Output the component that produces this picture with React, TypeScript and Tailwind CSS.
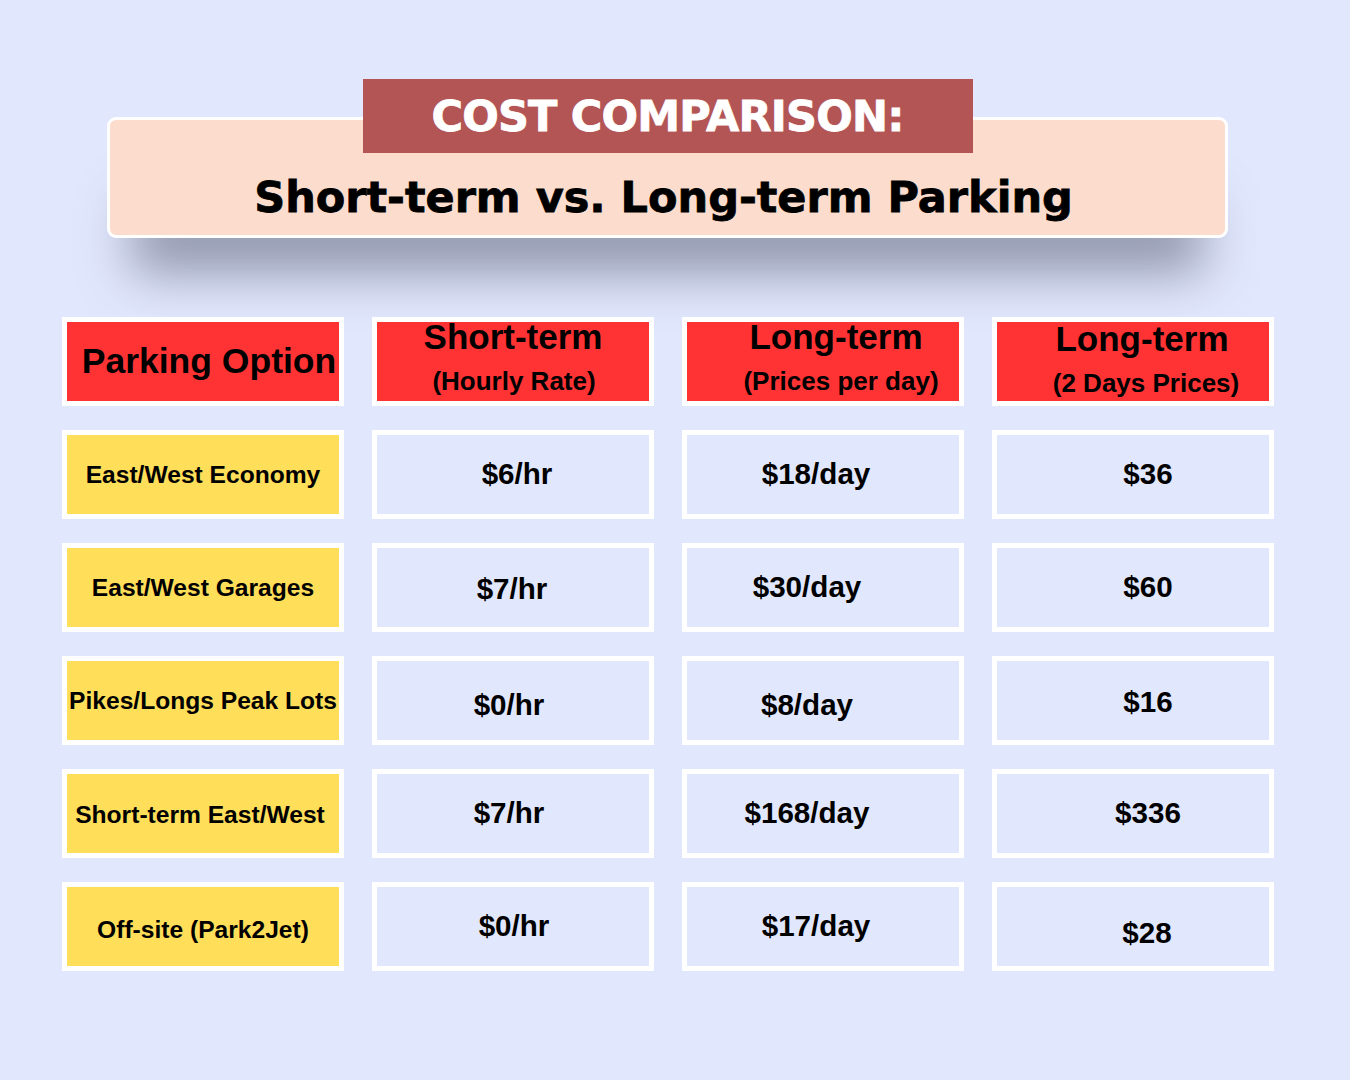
type Row = { cells: { text: string; shift: string }[] };

// shifts copied from the reference layout, cell by cell
const rows: Row[] = [
  {
    cells: [
      { text: "East/West Economy", shift: "translate-y-[1px]" },
      { text: "$6/hr", shift: "translate-x-[4px] -translate-y-[1px]" },
      { text: "$18/day", shift: "-translate-x-[7px] -translate-y-[1px]" },
      { text: "$36", shift: "translate-x-[15px] -translate-y-[1px]" },
    ],
  },
  {
    cells: [
      { text: "East/West Garages", shift: "translate-y-[1px]" },
      { text: "$7/hr", shift: "-translate-x-[1px] translate-y-[1px]" },
      { text: "$30/day", shift: "-translate-x-[16px] -translate-y-[1px]" },
      { text: "$60", shift: "translate-x-[15px] -translate-y-[1px]" },
    ],
  },
  {
    cells: [
      { text: "Pikes/Longs Peak Lots", shift: "translate-y-[1px]" },
      { text: "$0/hr", shift: "-translate-x-[4px] translate-y-[4px]" },
      { text: "$8/day", shift: "-translate-x-[16px] translate-y-[4px]" },
      { text: "$16", shift: "translate-x-[15px] translate-y-[1px]" },
    ],
  },
  {
    cells: [
      { text: "Short-term East/West", shift: "-translate-x-[3px] translate-y-[2px]" },
      { text: "$7/hr", shift: "-translate-x-[4px] -translate-y-[1px]" },
      { text: "$168/day", shift: "-translate-x-[16px] -translate-y-[1px]" },
      { text: "$336", shift: "translate-x-[15px] -translate-y-[1px]" },
    ],
  },
  {
    cells: [
      { text: "Off-site (Park2Jet)", shift: "translate-y-[4px]" },
      { text: "$0/hr", shift: "translate-x-[1px] -translate-y-[1px]" },
      { text: "$17/day", shift: "-translate-x-[7px] -translate-y-[1px]" },
      { text: "$28", shift: "translate-x-[14px] translate-y-[6px]" },
    ],
  },
];

function HeadCell({ top, sub, topShift, subShift }: { top: string; sub: string; topShift: string; subShift: string }) {
  return (
    <div className="h-[89px] border-[5px] border-white bg-[#ff3333] flex flex-col items-center text-black font-bold leading-none">
      <span className={`text-[35px] -mt-[3px] ${topShift}`}>{top}</span>
      <span className={`text-[26px] mt-[14px] ${subShift}`}>{sub}</span>
    </div>
  );
}

export default function App() {
  return (
    <div className="w-[1350px] h-[1080px] bg-[#e1e7fc] flex flex-col items-start pt-[79px]">
      {/* title block */}
      <div className="ml-[107px] flex flex-col items-center w-[1121px]">
        <div className="relative z-10 w-[610px] h-[74px] bg-[#b35555] flex items-center justify-center">
          <span className="text-white text-[43px] font-bold tracking-[-0.8px] font-['DejaVu_Sans',sans-serif] leading-none [-webkit-text-stroke:0.8px_white]">
            COST COMPARISON:
          </span>
        </div>
        <div className="-mt-[36px] w-full h-[121px] rounded-[9px] border-[3px] border-white bg-[#fcdccd] flex items-center justify-center pt-[36px] shadow-[0_60px_50px_-25px_rgba(80,85,110,0.55)]">
          <span className="-translate-x-[4px] translate-y-[2px] text-black text-[43px] font-bold font-['DejaVu_Sans',sans-serif] leading-none [-webkit-text-stroke:0.8px_black]">
            Short-term vs. Long-term Parking
          </span>
        </div>
      </div>

      {/* table */}
      <div className="ml-[62px] mt-[79px] grid grid-cols-[282px_282px_282px_282px] gap-x-[28px] gap-y-[24px] font-['Liberation_Sans',Arial,sans-serif]">
        <div className="h-[89px] border-[5px] border-white bg-[#ff3333] flex items-center justify-center text-black font-bold text-[35.5px] leading-none">
          <span className="translate-x-[6px]">Parking Option</span>
        </div>
        <HeadCell top="Short-term" sub="(Hourly Rate)" topShift="" subShift="translate-x-[1px]" />
        <HeadCell top="Long-term" sub="(Prices per day)" topShift="translate-x-[13px]" subShift="translate-x-[18px]" />
        <HeadCell top="Long-term" sub="(2 Days Prices)" topShift="translate-x-[9px] translate-y-[2px]" subShift="translate-x-[13px] translate-y-[2px]" />
        {rows.map((r, i) => (
          <div key={i} className="contents">
            {r.cells.map((c, j) => (
              <div
                key={j}
                className={`h-[89px] border-[5px] border-white flex items-center justify-center text-black font-bold leading-none ${
                  j === 0 ? "bg-[#ffde59] text-[24.6px]" : "bg-[#e1e7fc] text-[29.6px]"
                }`}
              >
                <span className={c.shift}>{c.text}</span>
              </div>
            ))}
          </div>
        ))}
      </div>
    </div>
  );
}
